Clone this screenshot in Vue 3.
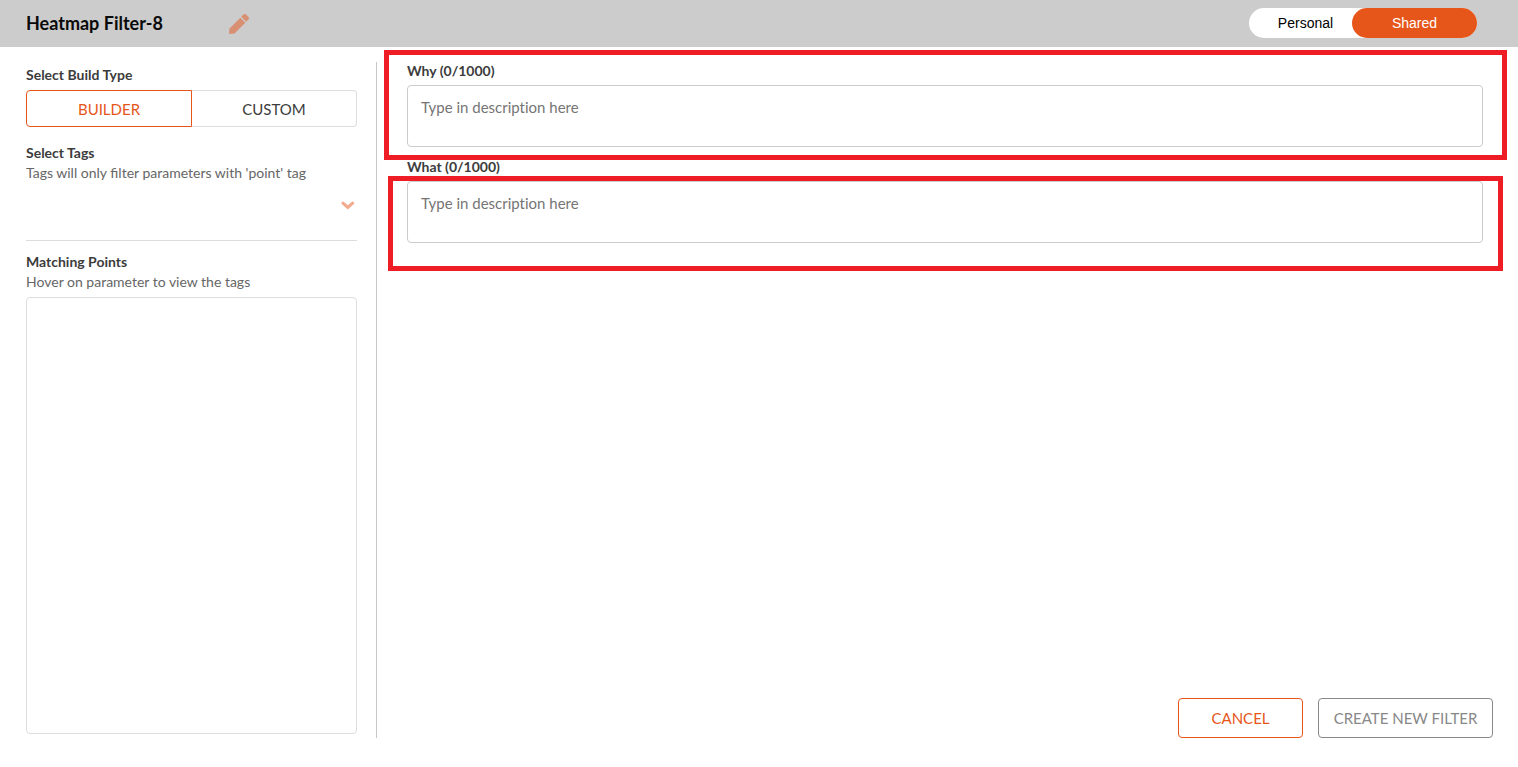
<script setup>
import { ref } from 'vue'

const limit = 1000
const buildType = ref('builder')
const scope = ref('shared')
const fields = ref([
  { id: 'why', label: 'Why', text: '' },
  { id: 'what', label: 'What', text: '' },
])
</script>

<template>
  <div class="page">
    <header class="topbar">
      <h1 class="title">Heatmap Filter-8</h1>
      <button class="icon-button" type="button" aria-label="Edit name">
        <svg class="pencil" viewBox="0 0 512 512" aria-hidden="true">
          <path d="M290.74 93.24l128.02 128.02-277.99 277.99-114.14 12.6C11.35 513.54-1.56 500.62.14 485.34l12.7-114.22 277.9-277.88zm207.2-19.06l-60.11-60.11c-18.75-18.75-49.16-18.75-67.91 0l-56.55 56.55 128.02 128.02 56.55-56.55c18.75-18.76 18.75-49.16 0-67.91z" />
        </svg>
      </button>
      <div class="scope">
        <button type="button" class="scope-option" :class="{ active: scope === 'personal' }" @click="scope = 'personal'">Personal</button>
        <button type="button" class="scope-option" :class="{ active: scope === 'shared' }" @click="scope = 'shared'">Shared</button>
      </div>
    </header>

    <div class="content">
      <aside class="sidebar">
        <h2 class="label">Select Build Type</h2>
        <div class="segments">
          <button type="button" class="segment" :class="{ active: buildType === 'builder' }" @click="buildType = 'builder'">BUILDER</button>
          <button type="button" class="segment" :class="{ active: buildType === 'custom' }" @click="buildType = 'custom'">CUSTOM</button>
        </div>

        <h2 class="label">Select Tags</h2>
        <p class="hint">Tags will only filter parameters with 'point' tag</p>
        <div class="tags">
          <button class="icon-button" type="button" aria-label="Show tags">
            <svg class="chevron" viewBox="0 0 14 16" aria-hidden="true">
              <path d="M2 6.2 L6.8 10.4 L11.6 6.2" />
            </svg>
          </button>
        </div>

        <h2 class="label">Matching Points</h2>
        <p class="hint">Hover on parameter to view the tags</p>
        <div class="points"></div>
      </aside>

      <main class="main">
        <div class="fields">
          <div v-for="field in fields" :key="field.id" class="field" :class="field.id">
            <label class="label" :for="field.id">{{ field.label }} ({{ field.text.length }}/{{ limit }})</label>
            <textarea :id="field.id" v-model="field.text" class="textarea" :maxlength="limit" placeholder="Type in description here"></textarea>
            <div class="marker"></div>
          </div>
        </div>
        <div class="actions">
          <button type="button" class="action cancel">CANCEL</button>
          <button type="button" class="action create">CREATE NEW FILTER</button>
        </div>
      </main>
    </div>
  </div>
</template>

<style>
body {
  margin: 0;
  background: #fff;
}
</style>

<style scoped>
.page,
.page * {
  box-sizing: border-box;
}

.page {
  display: flex;
  flex-direction: column;
  min-height: 100vh;
  font-family: Lato, "Open Sans", sans-serif;
  color: #3c3c3c;
}

button {
  margin: 0;
  padding: 0;
  font-family: inherit;
  cursor: pointer;
}

.topbar {
  display: flex;
  align-items: center;
  height: 47px;
  padding: 0 41px 1px 26px;
  background: #ccc;
}

.title {
  width: 203px;
  margin: 0;
  font-size: 18px;
  line-height: 24px;
  font-weight: 700;
  color: #0a0a0a;
}

.icon-button {
  display: flex;
  border: 0;
  background: none;
}

.pencil {
  width: 20px;
  height: 20px;
  margin-top: 2px;
  fill: #e6561a;
  opacity: 0.5;
}

.chevron {
  width: 14px;
  height: 16px;
  fill: none;
  stroke: #e6561a;
  stroke-width: 3;
  stroke-linecap: round;
  stroke-linejoin: miter;
  opacity: 0.5;
}

.scope {
  display: flex;
  margin-left: auto;
  border-radius: 15px;
  background: #fff;
}

.scope-option {
  width: 125px;
  height: 30px;
  border: 0;
  border-radius: 15px;
  background: transparent;
  font-family: "Liberation Sans", Arial, sans-serif;
  font-size: 14px;
  color: #000;
}

.scope-option:first-child {
  width: 103px;
  padding-left: 10px;
}

.scope-option.active {
  background: #e6561a;
  color: #fff;
}

.content {
  display: flex;
  flex: 1;
  padding: 15px 25px 29px 26px;
}

.sidebar {
  display: flex;
  flex-direction: column;
  width: 351px;
  padding: 3px 19px 4px 0;
  border-right: 1px solid #c8c8c8;
}

.label {
  display: block;
  margin: 0;
  font-size: 14px;
  line-height: 20px;
  font-weight: 700;
  color: #3c3c3c;
}

.hint {
  margin: 0;
  font-size: 14px;
  line-height: 20px;
  color: #666;
}

.segments {
  display: flex;
  margin: 5px 0 16px;
}

.segment {
  flex: 1;
  height: 37px;
  border: 1px solid #ddd;
  background: #fff;
  font-size: 15px;
  color: #3c3c3c;
}

.segment:first-child {
  border-radius: 4px 0 0 4px;
}

.segment:last-child {
  border-left: 0;
  border-radius: 0 4px 4px 0;
}

.segment.active {
  border: 1px solid #e6561a;
  color: #e6561a;
}

.tags {
  display: flex;
  justify-content: flex-end;
  height: 58px;
  margin-bottom: 11px;
  padding: 14px 2px 0 0;
  border-bottom: 1px solid #ddd;
}

.tags .icon-button {
  align-self: flex-start;
}

.points {
  flex: 1;
  margin-top: 5px;
  border: 1px solid #ddd;
  border-radius: 4px;
}

.main {
  display: flex;
  flex: 1;
  flex-direction: column;
  justify-content: space-between;
  min-width: 0;
}

.fields {
  display: flex;
  flex-direction: column;
  gap: 11px;
  padding: 0 10px 0 30px;
}

.field {
  position: relative;
}

.field .label {
  line-height: 18px;
}

.textarea {
  display: block;
  width: 100%;
  height: 62px;
  margin-top: 5px;
  padding: 11px 13px;
  border: 1px solid #ccc;
  border-radius: 4px;
  background: #fff;
  font-family: inherit;
  font-size: 15px;
  line-height: 20px;
  font-variant-ligatures: none;
  color: #3c3c3c;
  resize: none;
}

.textarea::placeholder {
  color: #757575;
}

.marker {
  position: absolute;
  border: 5px solid #ee1c24;
  pointer-events: none;
}

.why .marker {
  inset: -12px -24px -13px -23px;
}

.what .marker {
  inset: 18px -20px -28px -19px;
}

.actions {
  display: flex;
  justify-content: flex-end;
  gap: 15px;
}

.action {
  height: 40px;
  border: 1px solid #888;
  border-radius: 4px;
  background: #fff;
  font-size: 15px;
  color: #888;
}

.cancel {
  width: 125px;
  border-color: #e6561a;
  color: #e6561a;
}

.create {
  width: 175px;
}
</style>
